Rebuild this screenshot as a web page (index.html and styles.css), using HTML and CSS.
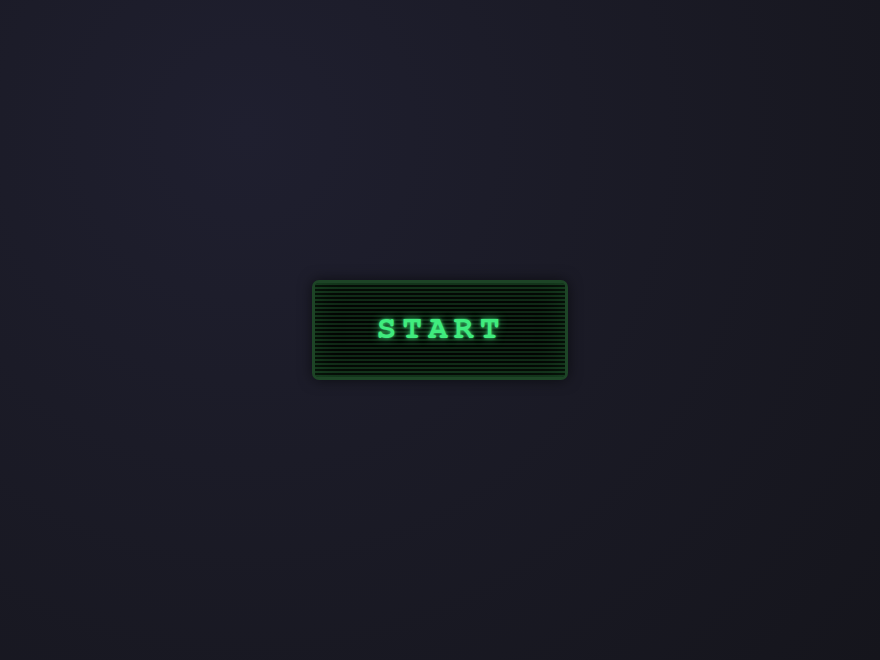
FILE: index.html
```html
<!DOCTYPE html>
<html lang="en">
<head>
    <meta charset="UTF-8">
    <meta name="viewport" content="width=device-width, initial-scale=1.0">
    <title>Start</title>
    <link rel="stylesheet" href="styles.css">
</head>
<body>
    <div class="stage">
        <button class="crt-button" type="button">
            <span class="crt-label">START</span>
        </button>
    </div>
</body>
</html>
```

FILE: styles.css
```css
html, body { margin: 0; height: 100%; }
body {
    background: radial-gradient(circle at 28% 20%, #1f1f2f 0%, #1b1b27 40%, #15151c 100%);
    font-family: "Liberation Mono", "Courier New", monospace;
}
.stage { height: 100%; display: flex; align-items: center; justify-content: center; }

/* green phosphor screen with scanlines */
.crt-button {
    position: relative;
    width: 256px;
    height: 100px;
    padding: 0;
    border: 3px solid #1d4426;
    border-radius: 7px;
    background: #070907;
    box-shadow: 0 0 14px rgba(0,0,0,0.55), inset 0 0 26px rgba(30,90,44,0.6);
    cursor: pointer;
    display: flex;
    align-items: center;
    justify-content: center;
    overflow: hidden;
}
.crt-button::before {
    content: "";
    position: absolute;
    inset: 0;
    background: repeating-linear-gradient(to bottom, rgba(28,84,42,0.4) 0px, rgba(28,84,42,0.4) 2px, rgba(0,0,0,0.55) 2px, rgba(0,0,0,0.55) 4px);
    pointer-events: none;
}
.crt-label {
    position: relative;
    top: -2px;
    font-family: "Nimbus Mono PS", "Nimbus Mono L", "FreeMono", "Courier", "Courier New", monospace;
    font-weight: bold;
    font-size: 33px;
    letter-spacing: 6px;
    padding-left: 2px;
    color: #40ec7e;
    text-shadow: 0 0 3px rgba(64,236,126,0.9), 0 0 10px rgba(64,236,126,0.55);
}
```
